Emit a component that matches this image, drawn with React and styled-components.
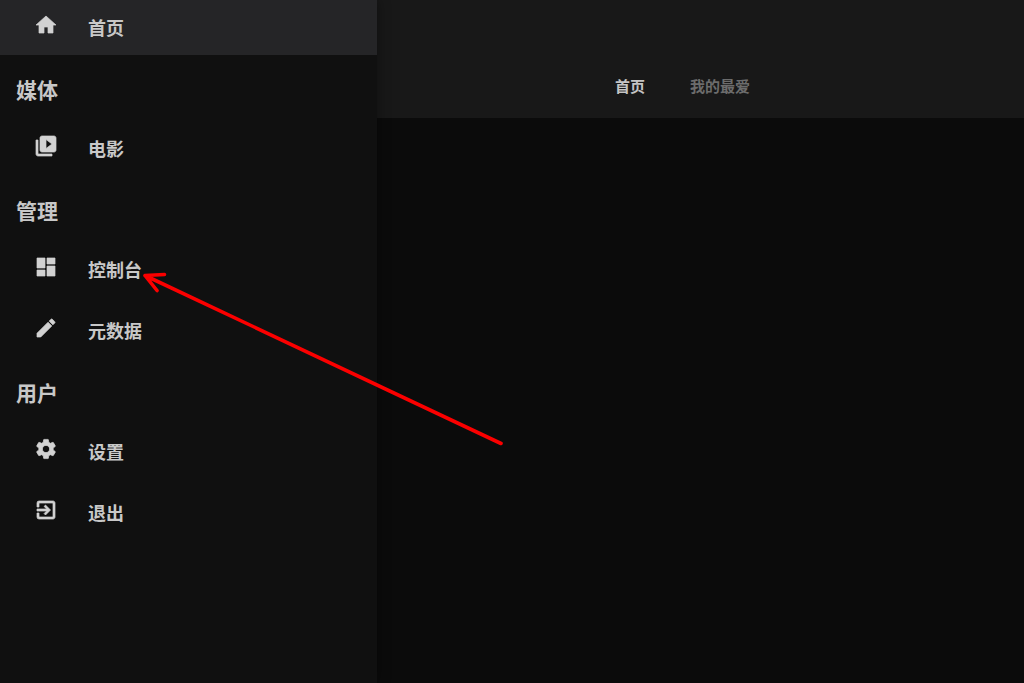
import React, { useState } from "react";
import styled, { createGlobalStyle } from "styled-components";
import {
  MdHome,
  MdVideoLibrary,
  MdDashboard,
  MdEdit,
  MdSettings,
  MdExitToApp,
} from "react-icons/md";

const sections = [
  {
    id: "main",
    items: [{ id: "home", label: "首页", icon: MdHome }],
  },
  {
    id: "media",
    title: "媒体",
    items: [{ id: "movies", label: "电影", icon: MdVideoLibrary }],
  },
  {
    id: "admin",
    title: "管理",
    items: [
      { id: "dashboard", label: "控制台", icon: MdDashboard },
      { id: "metadata", label: "元数据", icon: MdEdit },
    ],
  },
  {
    id: "user",
    title: "用户",
    items: [
      { id: "settings", label: "设置", icon: MdSettings },
      { id: "logout", label: "退出", icon: MdExitToApp },
    ],
  },
];

const tabs = [
  { id: "home", label: "首页" },
  { id: "favorites", label: "我的最爱" },
];

const GlobalStyle = createGlobalStyle`
  * {
    box-sizing: border-box;
  }

  body {
    margin: 0;
    background: #0b0b0b;
    font-family: "Noto Sans", "Noto Sans CJK SC", sans-serif;
  }
`;

const Page = styled.div`
  position: relative;
  display: flex;
  min-height: 100vh;
  overflow: hidden;
`;

const Drawer = styled.nav`
  flex: 0 0 377px;
  background: #101010;
  box-shadow: 0 0 12px rgba(0, 0, 0, 0.4);
  z-index: 1;
`;

const SectionTitle = styled.h3`
  display: flex;
  align-items: center;
  height: 66px;
  margin: 0;
  padding: 4px 16px 0;
  color: #c8c8c8;
  font-size: 21px;
  font-weight: 600;
  line-height: 32px;
`;

const SectionItems = styled.div`
  display: flex;
  flex-direction: column;
  gap: 6px;
`;

const DrawerLink = styled.a`
  display: flex;
  align-items: center;
  gap: 30px;
  height: 55px;
  padding: 0 34px;
  background: ${(props) => (props.$active ? "#252527" : "transparent")};
  color: #c8c8c8;
  font-size: 18px;
  font-weight: 600;
  line-height: 28px;
  text-decoration: none;

  svg {
    width: 24px;
    height: 24px;
    margin-bottom: 5px;
    color: #d2d2d2;
    stroke-linejoin: round;
  }

  path:not([fill="none"]) {
    stroke-width: 0.7;
  }
`;

const Main = styled.main`
  flex: 1;
  min-width: 0;
`;

const Header = styled.header`
  display: flex;
  align-items: flex-end;
  height: 118px;
  padding: 0 16px 20px 238px;
  background: #181818;
`;

const TabList = styled.div`
  display: flex;
  gap: 45px;
`;

const Tab = styled.button`
  padding: 0;
  border: none;
  background: none;
  color: ${(props) => (props.$active ? "#c4c4c4" : "#6c6c6c")};
  font-family: inherit;
  font-size: 15px;
  font-weight: 700;
  line-height: 24px;
  white-space: nowrap;
  cursor: pointer;
`;

const Pointer = styled.svg`
  position: absolute;
  top: 268px;
  left: 140px;
  width: 370px;
  height: 182px;
  pointer-events: none;
  z-index: 2;
`;

const App = () => {
  const [activeItem, setActiveItem] = useState("home");
  const [activeTab, setActiveTab] = useState("home");

  return (
    <>
      <GlobalStyle />
      <Page>
        <Drawer>
          {sections.map((section) => (
            <section key={section.id}>
              {section.title && <SectionTitle>{section.title}</SectionTitle>}
              <SectionItems>
                {section.items.map(({ id, label, icon: Icon }) => (
                  <DrawerLink
                    key={id}
                    href={`#${id}`}
                    $active={activeItem === id}
                    onClick={() => setActiveItem(id)}
                  >
                    <Icon />
                    <span>{label}</span>
                  </DrawerLink>
                ))}
              </SectionItems>
            </section>
          ))}
        </Drawer>

        <Main>
          <Header>
            <TabList>
              {tabs.map((tab) => (
                <Tab
                  key={tab.id}
                  type="button"
                  $active={activeTab === tab.id}
                  onClick={() => setActiveTab(tab.id)}
                >
                  {tab.label}
                </Tab>
              ))}
            </TabList>
          </Header>
        </Main>

        {/* Arrow from the content area to the dashboard entry */}
        <Pointer viewBox="0 0 370 182" fill="none" aria-hidden="true">
          <path
            d="M361 175.500L5 7.500M24.500 6.500L5 7.500L17 22.500"
            stroke="#fb0000"
            strokeWidth="3.600"
            strokeLinecap="round"
            strokeLinejoin="round"
          />
        </Pointer>
      </Page>
    </>
  );
};

export default App;
